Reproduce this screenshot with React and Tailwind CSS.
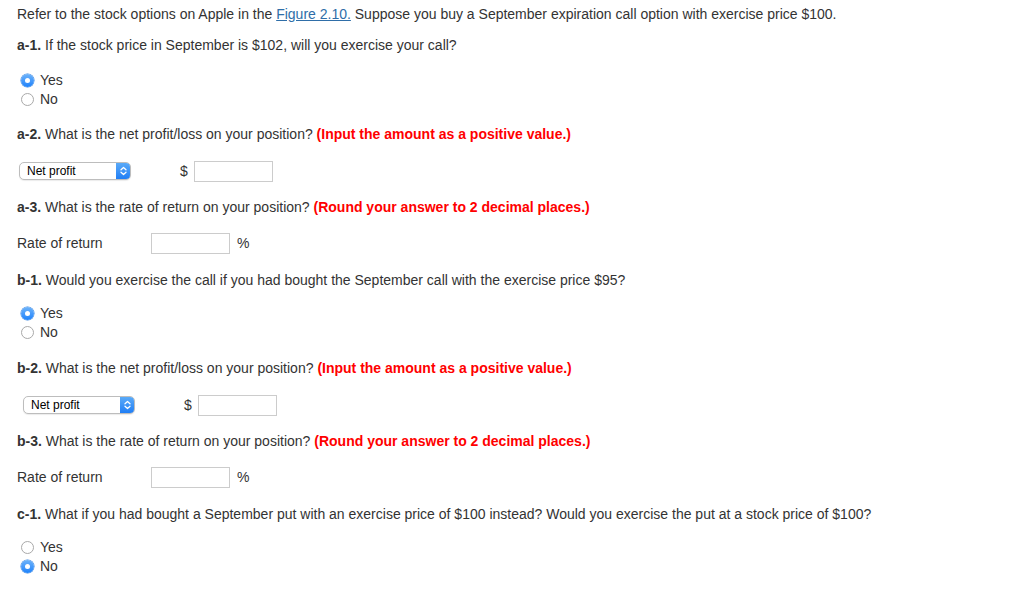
import React, { useState } from 'react';

// Radio button styled like a Mac/Safari native control
function Radio({ checked, label, onClick }) {
  return (
    <div className="flex h-[19px] items-center cursor-pointer" onClick={onClick}>
      <span
        className={
          checked
            ? 'ml-[4px] flex h-[13px] w-[13px] items-center justify-center rounded-full bg-gradient-to-b from-[#6cb3fa] to-[#1a82fb] shadow-[0_0_0_0.5px_#3a86e0]'
            : 'ml-[4px] h-[13px] w-[13px] rounded-full border border-[#a9a9a9] bg-white'
        }
      >
        {checked && <span className="h-[5px] w-[5px] rounded-full bg-white" />}
      </span>
      <span className="ml-[6px]">{label}</span>
    </div>
  );
}

function RadioGroup({ initial, className }) {
  const [value, setValue] = useState(initial);
  return (
    <div className={className}>
      <Radio label="Yes" checked={value === 'yes'} onClick={() => setValue('yes')} />
      <Radio label="No" checked={value === 'no'} onClick={() => setValue('no')} />
    </div>
  );
}

// Fake native select with the blue stepper on the right
function ProfitSelect() {
  return (
    <div className="flex h-[18px] w-[112px] overflow-hidden rounded-[5px] border border-[#bdbdbd] bg-white shadow-[0_1px_1px_rgba(0,0,0,0.08)]">
      <span className="flex-1 pl-[7px] text-[12px] leading-[16px] text-black">Net profit</span>
      <span className="flex w-[14px] items-center justify-center bg-gradient-to-b from-[#5aaaf8] to-[#1f7ef5]">
        <svg width="7" height="10" viewBox="0 0 7 10" fill="none" stroke="white" strokeWidth="1.3" strokeLinecap="round" strokeLinejoin="round">
          <path d="M1 3.8 L3.5 1.5 L6 3.8" />
          <path d="M1 6.2 L3.5 8.5 L6 6.2" />
        </svg>
      </span>
    </div>
  );
}

function Question({ label, text, hint, className }) {
  return (
    <p className={'flex h-[18px] items-center ' + className}>
      <span>
        <b className="font-bold">{label}</b> {text}
        {hint && <b className="font-bold text-[#ff0000]"> {hint}</b>}
      </span>
    </p>
  );
}

function AmountRow({ offset, className }) {
  return (
    <div className={'flex h-[22px] items-center ' + className}>
      <div className={offset}>
        <ProfitSelect />
      </div>
      <span className="ml-[49px]">$</span>
      <input type="text" className="ml-[6px] h-[21px] w-[79px] border border-[#cccccc] bg-white outline-none" />
    </div>
  );
}

function RateRow({ className }) {
  return (
    <div className={'flex h-[22px] items-center ' + className}>
      <span className="w-[134px]">Rate of return</span>
      <input type="text" className="h-[21px] w-[79px] border border-[#cccccc] bg-white outline-none" />
      <span className="ml-[7px]">%</span>
    </div>
  );
}

export default function App() {
  return (
    <div className="min-h-[590px] w-[1012px] bg-white pl-[17px] pt-[5px] text-[14px] text-[#333333] font-['Liberation_Sans',Arial,sans-serif]">
      <p className="flex h-[18px] items-center">
        <span>
          Refer to the stock options on Apple in the{' '}
          <a href="#" className="text-[#2f6ea8] underline">Figure 2.10.</a> Suppose you buy a September
          expiration call option with exercise price $100.
        </span>
      </p>

      <Question className="mt-[13px]" label="a-1." text="If the stock price in September is $102, will you exercise your call?" />
      <RadioGroup className="mt-[17px]" initial="yes" />

      <Question className="mt-[16px]" label="a-2." text="What is the net profit/loss on your position?" hint="(Input the amount as a positive value.)" />
      <AmountRow className="mt-[17px]" offset="ml-[2px]" />

      <Question className="mt-[16px]" label="a-3." text="What is the rate of return on your position?" hint="(Round your answer to 2 decimal places.)" />
      <RateRow className="mt-[16px]" />

      <Question className="mt-[17px]" label="b-1." text="Would you exercise the call if you had bought the September call with the exercise price $95?" />
      <RadioGroup className="mt-[15px]" initial="yes" />

      <Question className="mt-[17px]" label="b-2." text="What is the net profit/loss on your position?" hint="(Input the amount as a positive value.)" />
      <AmountRow className="mt-[17px]" offset="ml-[6px]" />

      <Question className="mt-[16px]" label="b-3." text="What is the rate of return on your position?" hint="(Round your answer to 2 decimal places.)" />
      <RateRow className="mt-[16px]" />

      <Question className="mt-[17px]" label="c-1." text="What if you had bought a September put with an exercise price of $100 instead? Would you exercise the put at a stock price of $100?" />
      <RadioGroup className="mt-[15px]" initial="no" />
    </div>
  );
}
